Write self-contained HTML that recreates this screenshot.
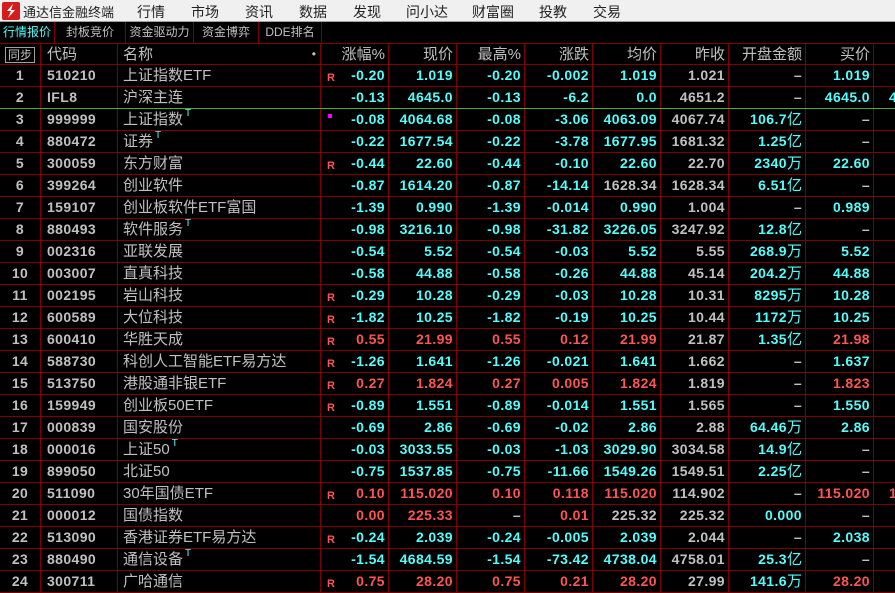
<!DOCTYPE html>
<html><head><meta charset="utf-8"><style>
*{margin:0;padding:0;box-sizing:border-box}
body{width:895px;height:589px;overflow:hidden;background:#000;font-family:"Liberation Sans","Noto Sans CJK SC",sans-serif;position:relative}
#tb{position:absolute;left:0;top:0;width:895px;height:22px;background:#f0f0f0;border-bottom:1px solid #a0a0a0}
#tb span{position:absolute;top:2px;font-size:14px;color:#222}
#logo{position:absolute;left:2px;top:2px;width:18px;height:18px;background:#d41c1c;border-radius:2px}
#tabs{position:absolute;left:0;top:22px;height:21px;width:895px;background:#000}
#tabs div{position:absolute;top:0;height:21px;border-right:1px solid #800000;font-size:12px;color:#c0c0c0;text-align:center;line-height:21px}
.row{position:absolute;left:0;width:895px;height:22px;display:flex;border-bottom:1px solid #800000}
.row>div{height:21px;border-right:1px solid #800000;flex:none;text-align:right;padding-right:3px;font-weight:bold;font-size:14px;line-height:21px;color:#c0c0c0;white-space:nowrap;overflow:hidden;position:relative;letter-spacing:0.4px}
.row>div:nth-child(1){width:41px;text-align:center;padding:0}
.row>div:nth-child(2){width:77px;text-align:left;padding-left:6px}
.row>div:nth-child(3){width:203px;text-align:left;padding-left:5px;font-weight:normal;font-size:15px;letter-spacing:0}
.row>div:nth-child(4),.row>div:nth-child(5),.row>div:nth-child(6),.row>div:nth-child(7),.row>div:nth-child(8),.row>div:nth-child(9),.row>div:nth-child(11){width:68px}
.row>div:nth-child(10){width:77px}
.row>div:nth-child(12){width:30px;border:none;text-align:left;padding-left:15px}
.hd>div{font-weight:normal!important;font-size:15px!important;letter-spacing:0!important}
.c{color:#54fcfc!important}.r{color:#ff5454!important}
.R{position:absolute;left:6px;top:3px;font-size:11px;color:#ff5454;font-weight:bold}
.M{position:absolute;left:7px;top:5px;width:4px;height:4px;background:#ff00ff}
sup{font-size:10px;color:#54fcfc;vertical-align:top;line-height:10px;margin-left:2px}
.u{font-weight:normal;font-size:15px;letter-spacing:0}
</style></head><body>
<div id="tb"><div id="logo"><svg width="18" height="18" viewBox="0 0 18 18"><path d="M11 2 L5 9 L9 9 L6 16 L13 8 L9 8 Z" fill="#fff"/></svg></div>
<span style="left:23px;font-size:13px">通达信金融终端</span>
<span style="left:137px">行情</span><span style="left:191px">市场</span><span style="left:245px">资讯</span><span style="left:299px">数据</span><span style="left:353px">发现</span><span style="left:406px">问小达</span><span style="left:472px">财富圈</span><span style="left:539px">投教</span><span style="left:593px">交易</span></div>
<div id="tabs">
<div style="left:0;width:55px;color:#54fcfc">行情报价</div>
<div style="left:55px;width:71px">封板竞价</div>
<div style="left:126px;width:68px">资金驱动力</div>
<div style="left:194px;width:65px">资金博弈</div>
<div style="left:259px;width:63px">DDE排名</div>
</div>
<div class="row hd" style="top:43px;border-top:1px solid #800000"><div><span style="display:inline-block;border:1px solid #a0a0a0;font-size:12px;line-height:14px;padding:0 2px;margin-top:2px">同步</span></div><div>代码</div><div>名称<span style="position:absolute;right:4px;top:0;font-size:12px">•</span></div><div>涨幅%</div><div>现价</div><div>最高%</div><div>涨跌</div><div>均价</div><div>昨收</div><div>开盘金额</div><div>买价</div><div></div></div>

<div class="row" style="top:65px"><div>1</div><div>510210</div><div>上证指数ETF</div><div class="c"><span class="R">R</span>-0.20</div><div class="c">1.019</div><div class="c">-0.20</div><div class="c">-0.002</div><div class="c">1.019</div><div>1.021</div><div>–</div><div class="c">1.019</div><div></div></div>
<div class="row" style="top:87px;border-bottom-color:#4caf2a"><div>2</div><div>IFL8</div><div>沪深主连</div><div class="c">-0.13</div><div class="c">4645.0</div><div class="c">-0.13</div><div class="c">-6.2</div><div class="c">0.0</div><div>4651.2</div><div>–</div><div class="c">4645.0</div><div class="c">4</div></div>
<div class="row" style="top:109px"><div>3</div><div>999999</div><div>上证指数<sup>T</sup></div><div class="c"><span class="M"></span>-0.08</div><div class="c">4064.68</div><div class="c">-0.08</div><div class="c">-3.06</div><div class="c">4063.09</div><div>4067.74</div><div class="c">106.7<span class="u">亿</span></div><div>–</div><div></div></div>
<div class="row" style="top:131px"><div>4</div><div>880472</div><div>证券<sup>T</sup></div><div class="c">-0.22</div><div class="c">1677.54</div><div class="c">-0.22</div><div class="c">-3.78</div><div class="c">1677.95</div><div>1681.32</div><div class="c">1.25<span class="u">亿</span></div><div>–</div><div></div></div>
<div class="row" style="top:153px"><div>5</div><div>300059</div><div>东方财富</div><div class="c"><span class="R">R</span>-0.44</div><div class="c">22.60</div><div class="c">-0.44</div><div class="c">-0.10</div><div class="c">22.60</div><div>22.70</div><div class="c">2340<span class="u">万</span></div><div class="c">22.60</div><div></div></div>
<div class="row" style="top:175px"><div>6</div><div>399264</div><div>创业软件</div><div class="c">-0.87</div><div class="c">1614.20</div><div class="c">-0.87</div><div class="c">-14.14</div><div>1628.34</div><div>1628.34</div><div class="c">6.51<span class="u">亿</span></div><div>–</div><div></div></div>
<div class="row" style="top:197px"><div>7</div><div>159107</div><div>创业板软件ETF富国</div><div class="c">-1.39</div><div class="c">0.990</div><div class="c">-1.39</div><div class="c">-0.014</div><div class="c">0.990</div><div>1.004</div><div>–</div><div class="c">0.989</div><div></div></div>
<div class="row" style="top:219px"><div>8</div><div>880493</div><div>软件服务<sup>T</sup></div><div class="c">-0.98</div><div class="c">3216.10</div><div class="c">-0.98</div><div class="c">-31.82</div><div class="c">3226.05</div><div>3247.92</div><div class="c">12.8<span class="u">亿</span></div><div>–</div><div></div></div>
<div class="row" style="top:241px"><div>9</div><div>002316</div><div>亚联发展</div><div class="c">-0.54</div><div class="c">5.52</div><div class="c">-0.54</div><div class="c">-0.03</div><div class="c">5.52</div><div>5.55</div><div class="c">268.9<span class="u">万</span></div><div class="c">5.52</div><div></div></div>
<div class="row" style="top:263px"><div>10</div><div>003007</div><div>直真科技</div><div class="c">-0.58</div><div class="c">44.88</div><div class="c">-0.58</div><div class="c">-0.26</div><div class="c">44.88</div><div>45.14</div><div class="c">204.2<span class="u">万</span></div><div class="c">44.88</div><div></div></div>
<div class="row" style="top:285px"><div>11</div><div>002195</div><div>岩山科技</div><div class="c"><span class="R">R</span>-0.29</div><div class="c">10.28</div><div class="c">-0.29</div><div class="c">-0.03</div><div class="c">10.28</div><div>10.31</div><div class="c">8295<span class="u">万</span></div><div class="c">10.28</div><div></div></div>
<div class="row" style="top:307px"><div>12</div><div>600589</div><div>大位科技</div><div class="c"><span class="R">R</span>-1.82</div><div class="c">10.25</div><div class="c">-1.82</div><div class="c">-0.19</div><div class="c">10.25</div><div>10.44</div><div class="c">1172<span class="u">万</span></div><div class="c">10.25</div><div></div></div>
<div class="row" style="top:329px"><div>13</div><div>600410</div><div>华胜天成</div><div class="r"><span class="R">R</span>0.55</div><div class="r">21.99</div><div class="r">0.55</div><div class="r">0.12</div><div class="r">21.99</div><div>21.87</div><div class="c">1.35<span class="u">亿</span></div><div class="r">21.98</div><div></div></div>
<div class="row" style="top:351px"><div>14</div><div>588730</div><div>科创人工智能ETF易方达</div><div class="c"><span class="R">R</span>-1.26</div><div class="c">1.641</div><div class="c">-1.26</div><div class="c">-0.021</div><div class="c">1.641</div><div>1.662</div><div>–</div><div class="c">1.637</div><div></div></div>
<div class="row" style="top:373px"><div>15</div><div>513750</div><div>港股通非银ETF</div><div class="r"><span class="R">R</span>0.27</div><div class="r">1.824</div><div class="r">0.27</div><div class="r">0.005</div><div class="r">1.824</div><div>1.819</div><div>–</div><div class="r">1.823</div><div></div></div>
<div class="row" style="top:395px"><div>16</div><div>159949</div><div>创业板50ETF</div><div class="c"><span class="R">R</span>-0.89</div><div class="c">1.551</div><div class="c">-0.89</div><div class="c">-0.014</div><div class="c">1.551</div><div>1.565</div><div>–</div><div class="c">1.550</div><div></div></div>
<div class="row" style="top:417px"><div>17</div><div>000839</div><div>国安股份</div><div class="c">-0.69</div><div class="c">2.86</div><div class="c">-0.69</div><div class="c">-0.02</div><div class="c">2.86</div><div>2.88</div><div class="c">64.46<span class="u">万</span></div><div class="c">2.86</div><div></div></div>
<div class="row" style="top:439px"><div>18</div><div>000016</div><div>上证50<sup>T</sup></div><div class="c">-0.03</div><div class="c">3033.55</div><div class="c">-0.03</div><div class="c">-1.03</div><div class="c">3029.90</div><div>3034.58</div><div class="c">14.9<span class="u">亿</span></div><div>–</div><div></div></div>
<div class="row" style="top:461px"><div>19</div><div>899050</div><div>北证50</div><div class="c">-0.75</div><div class="c">1537.85</div><div class="c">-0.75</div><div class="c">-11.66</div><div class="c">1549.26</div><div>1549.51</div><div class="c">2.25<span class="u">亿</span></div><div>–</div><div></div></div>
<div class="row" style="top:483px"><div>20</div><div>511090</div><div>30年国债ETF</div><div class="r"><span class="R">R</span>0.10</div><div class="r">115.020</div><div class="r">0.10</div><div class="r">0.118</div><div class="r">115.020</div><div>114.902</div><div>–</div><div class="r">115.020</div><div class="r">1</div></div>
<div class="row" style="top:505px"><div>21</div><div>000012</div><div>国债指数</div><div class="r">0.00</div><div class="r">225.33</div><div>–</div><div class="r">0.01</div><div>225.32</div><div>225.32</div><div class="c">0.000</div><div>–</div><div></div></div>
<div class="row" style="top:527px"><div>22</div><div>513090</div><div>香港证券ETF易方达</div><div class="c"><span class="R">R</span>-0.24</div><div class="c">2.039</div><div class="c">-0.24</div><div class="c">-0.005</div><div class="c">2.039</div><div>2.044</div><div>–</div><div class="c">2.038</div><div></div></div>
<div class="row" style="top:549px"><div>23</div><div>880490</div><div>通信设备<sup>T</sup></div><div class="c">-1.54</div><div class="c">4684.59</div><div class="c">-1.54</div><div class="c">-73.42</div><div class="c">4738.04</div><div>4758.01</div><div class="c">25.3<span class="u">亿</span></div><div>–</div><div></div></div>
<div class="row" style="top:571px"><div>24</div><div>300711</div><div>广哈通信</div><div class="r"><span class="R">R</span>0.75</div><div class="r">28.20</div><div class="r">0.75</div><div class="r">0.21</div><div class="r">28.20</div><div>27.99</div><div class="c">141.6<span class="u">万</span></div><div class="r">28.20</div><div></div></div>
</body></html>
